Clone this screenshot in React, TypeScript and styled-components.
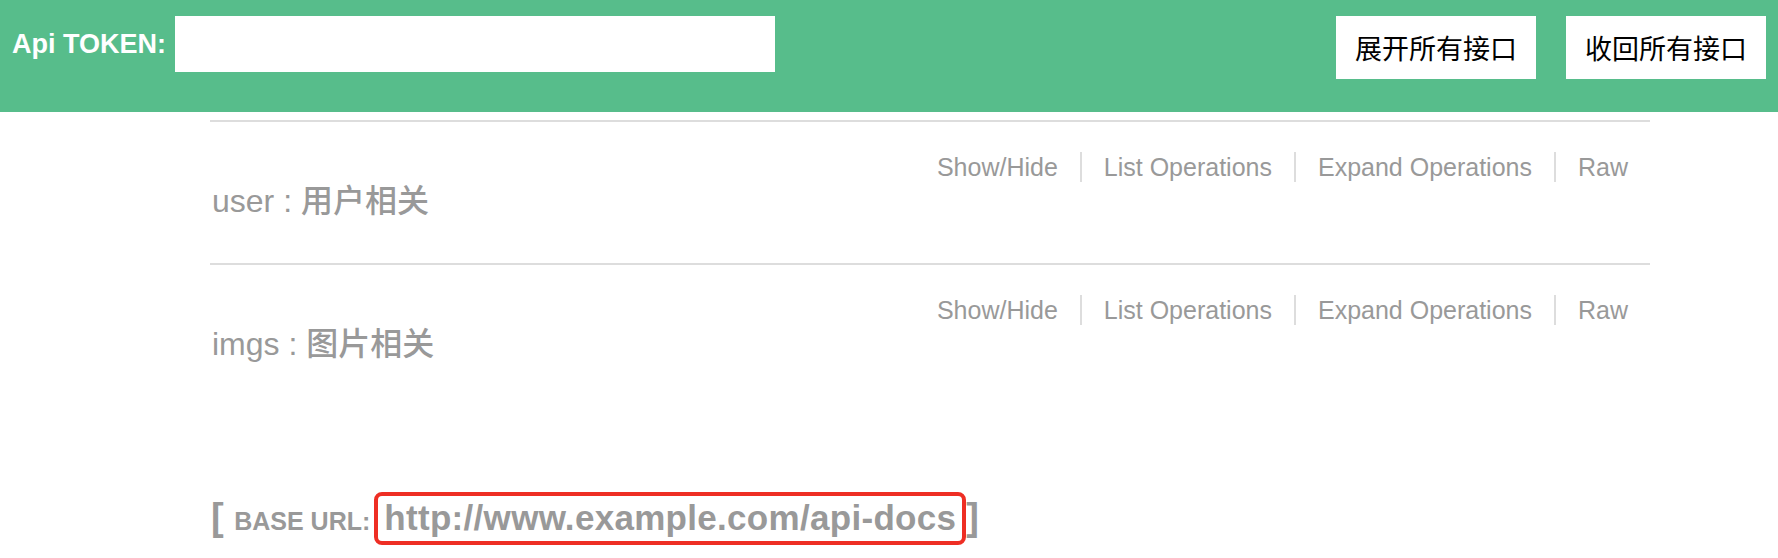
import React from "react";
import styled, { createGlobalStyle } from "styled-components";

const Global = createGlobalStyle`
  html, body { margin: 0; padding: 0; background: #fff; }
  body { font-family: "Liberation Sans", "Noto Sans CJK SC", sans-serif; overflow: hidden; }
  * { box-sizing: border-box; }
`;

const Header = styled.header`
  display: flex;
  align-items: flex-start;
  height: 112px;
  padding: 16px 12px 0 12px;
  background: #57bd8b;
`;

const TokenLabel = styled.label`
  font-family: "Liberation Sans", Arial, sans-serif;
  font-weight: bold;
  font-size: 27px;
  line-height: 56px;
  color: #fff;
  white-space: nowrap;
`;

const TokenInput = styled.input`
  width: 600px;
  height: 56px;
  margin-left: 9px;
  border: none;
  outline: none;
  background: #fff;
  padding: 0 8px;
  font-size: 20px;
`;

const ButtonGroup = styled.div`
  display: flex;
  gap: 30px;
  margin-left: auto;
`;

const HeaderButton = styled.button`
  width: 200px;
  height: 63px;
  border: none;
  background: #fff;
  color: #000;
  font-family: "Noto Sans CJK SC", sans-serif;
  font-size: 27px;
  padding: 0;
  cursor: pointer;
`;

const Content = styled.main`
  width: 1440px;
  margin: 8px 0 0 210px;
`;

const Resource = styled.section`
  display: flex;
  justify-content: space-between;
  align-items: flex-start;
  height: 143px;
  border-top: 2px solid #dddddd;
`;

const ResourceTitle = styled.h2`
  margin: 56px 0 0 2px;
  font-family: "Liberation Sans", "Noto Sans CJK SC", sans-serif;
  font-weight: normal;
  font-size: 32px;
  line-height: 40px;
  color: #999;
`;

const ResourceDesc = styled.span`
  font-family: "Noto Sans CJK SC", sans-serif;
  font-weight: 500;
`;

const Options = styled.ul`
  display: flex;
  list-style: none;
  margin: 30px 0 0 0;
  padding: 0;
`;

const Option = styled.li`
  padding: 0 22px;
  border-right: 2px solid #dddddd;
  font-family: "Liberation Sans", Arial, sans-serif;
  font-size: 25px;
  line-height: 30px;
  color: #999;
  white-space: nowrap;
  &:last-child { border-right: none; }
`;

const Footer = styled.h4`
  display: flex;
  align-items: baseline;
  margin: 86px 0 0 1px;
  color: #999;
  font-family: "Liberation Sans", Arial, sans-serif;
  font-weight: normal;
`;

const Bracket = styled.span`
  font-size: 38px;
  font-weight: bold;
  line-height: 1;
  white-space: pre;
`;

const BaseLabel = styled.span`
  font-size: 25px;
  font-weight: bold;
  line-height: 1;
  margin-right: 4px;
`;

const UrlBox = styled.span`
  display: inline-block;
  border: 4px solid #ee2e24;
  border-radius: 8px;
  padding: 7px 6px 8px 6px;
  font-size: 35px;
  font-weight: bold;
  letter-spacing: 0.3px;
  line-height: 30px;
  color: #999;
  white-space: nowrap;
`;

const resources = [
  { name: "user", desc: "用户相关" },
  { name: "imgs", desc: "图片相关" },
];

const options = ["Show/Hide", "List Operations", "Expand Operations", "Raw"];

export default function App() {
  return (
    <>
      <Global />
      <Header>
        <TokenLabel>Api TOKEN:</TokenLabel>
        <TokenInput type="text" />
        <ButtonGroup>
          <HeaderButton>展开所有接口</HeaderButton>
          <HeaderButton>收回所有接口</HeaderButton>
        </ButtonGroup>
      </Header>
      <Content>
        {resources.map((r) => (
          <Resource key={r.name}>
            <ResourceTitle>
              {r.name} : <ResourceDesc>{r.desc}</ResourceDesc>
            </ResourceTitle>
            <Options>
              {options.map((o) => (
                <Option key={o}>{o}</Option>
              ))}
            </Options>
          </Resource>
        ))}
        <Footer>
          <Bracket>[ </Bracket>
          <BaseLabel>BASE URL:</BaseLabel>
          <UrlBox>http://www.example.com/api-docs</UrlBox>
          <Bracket>]</Bracket>
        </Footer>
      </Content>
    </>
  );
}
